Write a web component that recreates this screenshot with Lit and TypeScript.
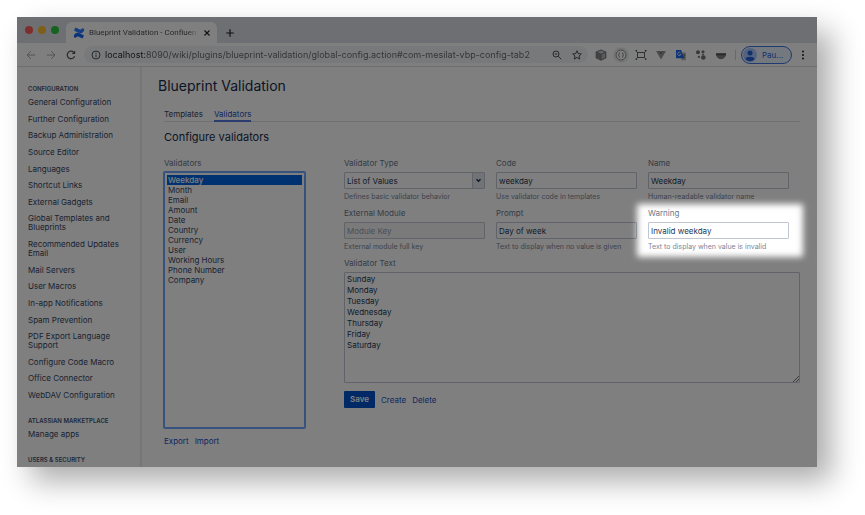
import { LitElement, html, css, svg, nothing } from "lit";
import { customElement } from "lit/decorators.js";

const CONFIG_LINKS = [
  "General Configuration", "Further Configuration", "Backup Administration", "Source Editor",
  "Languages", "Shortcut Links", "External Gadgets", "Global Templates and Blueprints",
  "Recommended Updates Email", "Mail Servers", "User Macros", "In-app Notifications",
  "Spam Prevention", "PDF Export Language Support", "Configure Code Macro",
  "Office Connector", "WebDAV Configuration",
];

const VALIDATORS = [
  "Weekday", "Month", "Email", "Amount", "Date", "Country", "Currency", "User",
  "Working Hours", "Phone Number", "Company",
];

const DAYS = "Sunday\nMonday\nTuesday\nWednesday\nThursday\nFriday\nSaturday";

const icon = (body: unknown, label = "") => html`<svg
  class="icon" viewBox="0 0 12 12" fill="none" stroke="currentColor" role="img" aria-label=${label || nothing}
>${body}</svg>`;

const ICONS = {
  back: svg`<path d="M10.200 6H2M5.800 2.200 2 6l3.800 3.800" />`,
  forward: svg`<path d="M1.800 6H10M6.200 2.200 10 6 6.200 9.800" />`,
  reload: svg`<path d="M9.600 7.200A3.800 3.800 0 1 1 8.800 3.300" stroke-width="1.200" /><path d="M10.200 1.400v3.500H6.700z" fill="currentColor" stroke="none" />`,
  info: svg`<circle cx="6" cy="6" r="4" /><path d="M6 5.500v2.600M6 3.600v1" />`,
  zoom: svg`<circle cx="5" cy="5" r="3" /><path d="M7.300 7.300 10.300 10.300M3.700 5h2.600" />`,
  star: svg`<path d="M6 1.700 7.200 4.600 10.300 4.900 8 7 8.700 10.100 6 8.400 3.300 10.100 4 7 1.700 4.900 4.800 4.600z" />`,
  cube: svg`<path d="M6 .8 11 3v6l-5 2.300L1 9V3z" fill="#85878a" stroke="none" /><path d="M6 1.500 10 3.200 6 4.900 2 3.200z" fill="#c9cacc" stroke="none" /><path d="M6.300 5.500 10.300 3.800v4.800L6.300 10.400z" fill="#b3b5b7" stroke="none" /><path d="M1 3 6 5.200 11 3M6 5.200v6M1 3v6l5 2.300L11 9V3L6 .8z" stroke="#66686b" stroke-width=".6" />`,
  braces: svg`<circle cx="6" cy="6" r="5" stroke-width=".7" /><path d="M5 3.700c-1 0-.8.600-.8 1.200S4 6 3.500 6c.5 0 .7.500.7 1.100s-.2 1.200.8 1.200M7 3.700c1 0 .8.600.8 1.200S8 6 8.500 6c-.5 0-.7.500-.7 1.100s.2 1.200-.8 1.200" stroke-width=".7" />`,
  frame: svg`<rect x="2.500" y="3.500" width="7" height="5" stroke-width=".9" /><path d="M2.500 3.500 1 2M9.500 3.500 11 2M2.500 8.500 1 10M9.500 8.500 11 10" stroke-width=".7" /><path d="M.5 1h1.600v1.300H.5zM9.900 1h1.600v1.300H9.900zM.5 9.500h1.600v1.300H.5zM9.900 9.500h1.600v1.300H9.900z" fill="#25672b" stroke="none" />`,
  vee: svg`<path d="M1 2h2.600L6 6.200 8.400 2H11L6 10.500z" fill="#94969a" stroke="none" /><path d="M3.600 2h1.700L6 3.200 6.700 2h1.700L6 6.200z" fill="#686a6e" stroke="none" />`,
  translate: svg`<path d="M5.500 3.500h5.300v7.800H6.500z" fill="#b0b3b8" stroke="none" /><path d="M1 1h5.200l2.600 8.300H1z" fill="#1a66f0" stroke="none" /><path d="M5.600 3.900A1.700 1.700 0 1 0 5.900 5.400H4.500" stroke="#dbe7ff" stroke-width=".9" /><path d="M7.700 6h2.600M9.600 6c-.2 1.200-1 2-1.800 2.600M8 7l2 2" stroke="#555" stroke-width=".7" />`,
  dots: svg`<g fill="#707275" stroke="none"><circle cx="3" cy="3.300" r="2" /><circle cx="8" cy="2.700" r="1.500" /><circle cx="8" cy="5.400" r=".9" /><circle cx="8.300" cy="8.500" r="2.300" /><circle cx="3.900" cy="7.900" r="1.100" /></g>`,
  bowl: svg`<path d="M1 4.500h10V6C10.500 8 8.500 10.300 6 10.300S1.500 8 1 6z" fill="#808285" stroke="none" /><path d="M1 4.300h10v2H1z" fill="#55575a" stroke="none" />`,
  close: svg`<path d="m3.500 3.500 5 5M8.500 3.500l-5 5" stroke-width="1.100" />`,
  plus: svg`<path d="M6 2.200v7.600M2.200 6h7.600" stroke-width="1.200" />`,
  more: svg`<g fill="currentColor" stroke="none"><circle cx="6" cy="2.500" r="1" /><circle cx="6" cy="6" r="1" /><circle cx="6" cy="9.500" r="1" /></g>`,
  confluence: svg`<g stroke="none"><path d="M1 8.300C3 5 4.800 5.500 7.200 6.600L11 8.400 9.500 11.600 5.700 9.800C4.200 9.100 3.700 9.500 2.700 11L.8 9.900z" fill="#1566f5" /><path d="M11 3.700C9 7 7.200 6.500 4.800 5.400L1 3.600 2.500.4l3.800 1.800c1.500.7 2 .3 3-1.200l1.900 1.100z" fill="#2b7dff" /></g>`,
};

@customElement("browser-chrome")
export class BrowserChrome extends LitElement {
  static styles = css`
    :host { display: block; color: #505357; }
    button { font: inherit; color: inherit; background: none; border: 0; padding: 0; display: flex; align-items: center; }
    .icon { width: 12px; height: 12px; display: block; flex: none; }
    .tabs { display: flex; align-items: flex-end; height: 26px; background: #dcdfe6; padding-left: 8px; }
    .lights { display: flex; gap: 5px; align-self: center; margin-right: 7px; }
    .light { width: 8px; height: 8px; border-radius: 50%; background: #ff5f57; }
    .light.min { background: #febc2e; }
    .light.max { background: #28c840; }
    .tab { display: flex; align-items: center; width: 151px; height: 21px; box-sizing: border-box; padding: 0 4px 0 7px; background: #fff; border-radius: 6px 6px 0 0; font-size: 8px; margin-right: 7px; }
    .title { flex: 1; min-width: 0; margin: 0 2px 0 4px; overflow: hidden; white-space: nowrap; font-family: Roboto, sans-serif; mask-image: linear-gradient(90deg, #000 90%, transparent); }
    .new { height: 21px; color: #202124; }
    .close { color: #202124; }
    .bar { display: flex; align-items: center; gap: 8px; height: 23px; padding: 0 8px; background: #fff; border-bottom: 1px solid #dadce0; }
    .off { color: #a5a8ac; }
    .address { flex: 1; min-width: 0; display: flex; align-items: center; gap: 8px; height: 17px; padding: 0 5px 0 6px; margin: 0 -1px 0 -1px; border-radius: 9px; background: #f1f3f4; }
    .url { flex: 1; min-width: 0; margin-left: -5px; border: 0; padding: 0; outline: 0; font: 9px/12px Inter, sans-serif; color: transparent; background: linear-gradient(90deg, #202124 40px, #5f6368 40px); background-clip: text; -webkit-background-clip: text; }
    .rule { width: 1px; height: 10px; background: #cfd2d6; }
    .halo { border-radius: 50%; background: #fff; box-shadow: 0 0 2px 1px #d5d5d5; }
    .profile { box-sizing: border-box; width: 51px; height: 18px; gap: 5px; padding: 0 1px; border: 1px solid #3f74e0; border-radius: 9px; background: #e8f0fe; color: #2864d8; font-size: 8px; margin: 0 -3px; }
    .avatar { width: 14px; height: 14px; }
  `;

  render() {
    return html`
      <div class="tabs">
        <div class="lights"><span class="light"></span><span class="light min"></span><span class="light max"></span></div>
        <div class="tab">
          ${icon(ICONS.confluence)}
          <span class="title">Blueprint Validation - Confluen</span>
          <button class="close" aria-label="Close tab">${icon(ICONS.close)}</button>
        </div>
        <button class="new" aria-label="New tab">${icon(ICONS.plus)}</button>
      </div>
      <div class="bar">
        <button class="off" aria-label="Back">${icon(ICONS.back)}</button>
        <button class="off" aria-label="Forward">${icon(ICONS.forward)}</button>
        <button aria-label="Reload">${icon(ICONS.reload)}</button>
        <div class="address">
          ${icon(ICONS.info)}
          <input class="url" aria-label="Address" value="localhost:8090/wiki/plugins/blueprint-validation/global-config.action#com-mesilat-vbp-config-tab2" />
          <button aria-label="Zoom">${icon(ICONS.zoom)}</button>
          <button aria-label="Bookmark">${icon(ICONS.star)}</button>
        </div>
        <button aria-label="Packages">${icon(ICONS.cube)}</button>
        <button class="halo" aria-label="JSON viewer">${icon(ICONS.braces)}</button>
        <button aria-label="Window size">${icon(ICONS.frame)}</button>
        <button aria-label="Vue devtools">${icon(ICONS.vee)}</button>
        <button aria-label="Translate">${icon(ICONS.translate)}</button>
        <button aria-label="Tools">${icon(ICONS.dots)}</button>
        <button aria-label="Private mode">${icon(ICONS.bowl)}</button>
        <span class="rule"></span>
        <button class="profile">
          <svg class="avatar" viewBox="0 0 14 14"><circle cx="7" cy="7" r="7" fill="#a9c5fb" /><circle cx="7" cy="5" r="2.500" fill="#2460d8" /><path d="M2.500 11c0-3 9-3 9 0-2 3-7 3-9 0z" fill="#2460d8" /></svg>
          Pau...
        </button>
        <button class="close" aria-label="Menu">${icon(ICONS.more)}</button>
      </div>
    `;
  }
}

@customElement("app-root")
export class AppRoot extends LitElement {
  static styles = css`
    :host { display: block; box-sizing: border-box; height: 100vh; padding: 17px 48px 48px 17px; background: #fff; font-family: Inter, "Liberation Sans", sans-serif; font-size: 8px; line-height: 10px; color: #172b4d; }
    .window { position: relative; display: flex; flex-direction: column; height: 100%; overflow: hidden; background: #fff; }
    .shadow { height: 100%; box-shadow: 14px 14px 28px rgba(0, 0, 0, 0.33); }
    .body { flex: 1; min-height: 0; display: grid; grid-template-columns: 125px 1fr; }
    a { color: #1a50c4; text-decoration: none; }
    .side { display: flex; flex-direction: column; min-height: 0; box-sizing: border-box; padding: 18px 12px 3px 11px; border-right: 2px solid #ebecf0; }
    .group { margin: 0; font-size: 6px; line-height: 8px; font-weight: 600; color: #42526e; text-transform: uppercase; }
    .links { display: flex; flex-direction: column; justify-content: space-between; margin: 5px 0 17px; padding: 0; list-style: none; line-height: 9px; }
    .links.long { flex: 1; }
    .links a { display: block; color: #344563; }
    .main { min-width: 0; padding: 9px 17px 0 16px; }
    h1 { margin: 0 0 12px; font-size: 14px; line-height: 20px; font-weight: 400; }
    .content { margin-left: 6px; }
    .tabs { display: flex; gap: 11px; height: 14px; box-sizing: border-box; border-bottom: 1px solid #dfe1e6; }
    .tabs a { height: 13px; line-height: 13px; color: #344563; }
    .tabs .on { color: #1a50c4; border-bottom: 2px solid #5577e0; height: 12px; }
    h2 { margin: 8px 0 14px; font-size: 11px; line-height: 14px; font-weight: 400; }
    .columns { display: grid; grid-template-columns: 141px 1fr; gap: 39px; }
    label { display: block; margin-bottom: 4px; color: #6b778c; }
    input, select, textarea { display: block; box-sizing: border-box; width: 100%; margin: 0; font: inherit; color: #253858; border: 1px solid #c1c7d0; border-radius: 1px; background: #fff; outline: 0; }
    .field input, .field select { height: 17px; padding: 0 2px; }
    .list { height: 256px; padding: 2px; border-color: #6ca4ff; box-shadow: 0 0 0 1px #6ca4ff; overflow: hidden; }
    .list option { padding: 0 1px; height: 10px; min-height: 10px; line-height: 10px; color: #344563; }
    .list option:checked { color: #fff; font-weight: 500; background: #0063e1 linear-gradient(#0063e1, #0063e1); }
    .actions { display: flex; align-items: center; gap: 6px; margin-top: 8px; }
    .fields { display: grid; grid-template-columns: repeat(3, 1fr); gap: 7px 11px; margin-right: 11px; }
    .field { position: relative; }
    .help { margin: 4px 0 0; font-size: 7px; line-height: 8px; color: #7a869a; white-space: nowrap; }
    .box { position: relative; }
    select.type { appearance: none; }
    .arrow { position: absolute; top: 1px; right: 1px; width: 12px; height: 15px; box-sizing: border-box; border-left: 1px solid #c1c7d0; background: #e4e7ee; pointer-events: none; }
    input:disabled { background: #f4f5f7; }
    input::placeholder { color: #97a0af; opacity: 1; }
    .text { margin-top: 7px; }
    textarea { height: 111px; padding: 1px 2px; line-height: 11px; resize: none; }
    .grip { position: absolute; right: 1px; bottom: 1px; width: 6px; height: 6px; }
    .save { height: 17px; padding: 0 6px; border: 0; border-radius: 1px; background: #0052cc; color: #fff; font: 600 8px/17px Inter, sans-serif; }
    /* Dims the whole window except a soft-edged area around the field. */
    .spot::after { content: ""; position: absolute; z-index: 2; inset: -4px -14px -6px -11px; border-radius: 2px; box-shadow: 0 0 0 1200px rgba(0, 0, 0, 0.5); filter: blur(3px); pointer-events: none; }
  `;

  private field(id: string, label: string, help: string, control: unknown, spot = false) {
    return html`<div class="field ${spot ? "spot" : ""}">
      <label for=${id}>${label}</label>${control}
      <p class="help">${help}</p>
    </div>`;
  }

  render() {
    return html`
      <div class="shadow"><div class="window">
        <browser-chrome></browser-chrome>
        <div class="body">
          <nav class="side">
            <h3 class="group">Configuration</h3>
            <ul class="links long">${CONFIG_LINKS.map((t) => html`<li><a href="#">${t}</a></li>`)}</ul>
            <h3 class="group">Atlassian Marketplace</h3>
            <ul class="links"><li><a href="#">Manage apps</a></li></ul>
            <h3 class="group">Users &amp; Security</h3>
          </nav>
          <main class="main">
            <h1>Blueprint Validation</h1>
            <div class="content">
              <nav class="tabs"><a href="#">Templates</a><a class="on" href="#">Validators</a></nav>
              <h2>Configure validators</h2>
              <div class="columns">
                <div>
                  <label for="list">Validators</label>
                  <select id="list" class="list" size="20">
                    ${VALIDATORS.map((v, i) => html`<option ?selected=${i === 0}>${v}</option>`)}
                  </select>
                  <div class="actions"><a href="#">Export</a><a href="#">Import</a></div>
                </div>
                <form>
                  <div class="fields">
                    ${this.field("type", "Validator Type", "Defines basic validator behavior", html`<div class="box">
                      <select id="type" class="type"><option>List of Values</option></select>
                      <svg class="arrow" viewBox="0 0 11 15" fill="none" stroke="#172b4d" stroke-width="1.300"><path d="m3.500 6.300 2 2 2-2" /></svg>
                    </div>`)}
                    ${this.field("code", "Code", "Use validator code in templates", html`<input id="code" value="weekday" />`)}
                    ${this.field("name", "Name", "Human-readable validator name", html`<input id="name" value="Weekday" />`)}
                    ${this.field("module", "External Module", "External module full key", html`<input id="module" placeholder="Module Key" disabled />`)}
                    ${this.field("prompt", "Prompt", "Text to display when no value is given", html`<input id="prompt" value="Day of week" />`)}
                    ${this.field("warning", "Warning", "Text to display when value is invalid", html`<input id="warning" value="Invalid weekday" />`, true)}
                  </div>
                  <div class="text">
                    <label for="text">Validator Text</label>
                    <div class="box">
                      <textarea id="text" .value=${DAYS}></textarea>
                      <svg class="grip" viewBox="0 0 6 6" stroke="#777"><path d="M0 6 6 0M3 6l3-3" /></svg>
                    </div>
                  </div>
                  <div class="actions"><button type="button" class="save">Save</button><a href="#">Create</a><a href="#">Delete</a></div>
                </form>
              </div>
            </div>
          </main>
        </div>
      </div></div>
    `;
  }
}
